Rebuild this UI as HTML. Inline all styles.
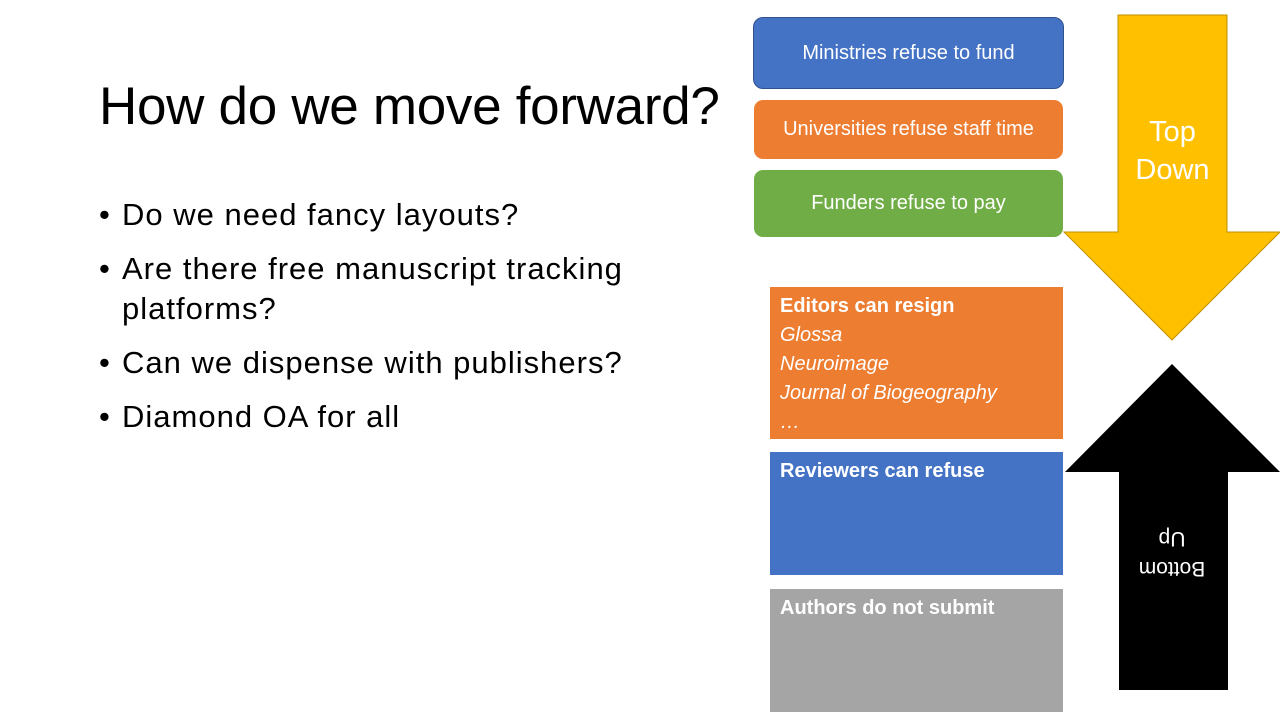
<!DOCTYPE html>
<html><head><style>
body{margin:0;width:1280px;height:720px;background:#fff;position:relative;overflow:hidden;font-family:"Liberation Sans",sans-serif}
.a{position:absolute}
.t{left:99px;top:76px;font-size:53px;color:#000;letter-spacing:-0.3px}
ul{position:absolute;left:99px;top:195px;margin:0;padding:0;list-style:none;font-size:31px;color:#000;width:600px}
li{position:relative;padding-left:23px;line-height:40px;margin-bottom:14px;letter-spacing:1px}
li:before{content:"•";position:absolute;left:0}
.b{color:#fff;display:flex;align-items:center;justify-content:center;font-size:20px;box-sizing:border-box}
.s{color:#fff;font-size:20px;padding:5px 10px;box-sizing:border-box;line-height:29px}
</style></head><body>
<div class="a t">How do we move forward?</div>
<ul>
<li>Do we need fancy layouts?</li>
<li>Are there free manuscript tracking platforms?</li>
<li>Can we dispense with publishers?</li>
<li>Diamond OA for all</li>
</ul>
<div class="a b" style="left:753px;top:17px;width:311px;height:72px;background:#4472c4;border:1px solid #2f528f;border-radius:10px">Ministries refuse to fund</div>
<div class="a b" style="left:754px;top:100px;width:309px;height:59px;background:#ed7d31;border-radius:9px">Universities refuse staff time</div>
<div class="a b" style="left:754px;top:170px;width:309px;height:67px;background:#70ad47;border-radius:9px">Funders refuse to pay</div>
<div class="a s" style="left:770px;top:287px;width:293px;height:152px;background:#ed7d31"><b>Editors can resign</b><br><i>Glossa<br>Neuroimage<br>Journal of Biogeography<br>…</i></div>
<div class="a s" style="left:770px;top:452px;width:293px;height:123px;background:#4472c4"><b>Reviewers can refuse</b></div>
<div class="a s" style="left:770px;top:589px;width:293px;height:123px;background:#a5a5a5"><b>Authors do not submit</b></div>
<svg class="a" style="left:0;top:0" width="1280" height="720">
<polygon points="1118,15 1227,15 1227,232 1280,232 1172,340 1064,232 1118,232" fill="#ffc000" stroke="#bf9000" stroke-width="1"/>
<polygon points="1172,364 1280,472 1228,472 1228,690 1119,690 1119,472 1065,472" fill="#000"/>
</svg>
<div class="a" style="left:1118px;top:113px;width:109px;text-align:center;color:#fff;font-size:29px;line-height:38px">Top<br>Down</div>
<div class="a" style="left:1112px;top:523px;width:120px;text-align:center;color:#fff;font-size:21px;line-height:30px;transform:rotate(180deg)">Bottom<br>Up</div>
</body></html>
